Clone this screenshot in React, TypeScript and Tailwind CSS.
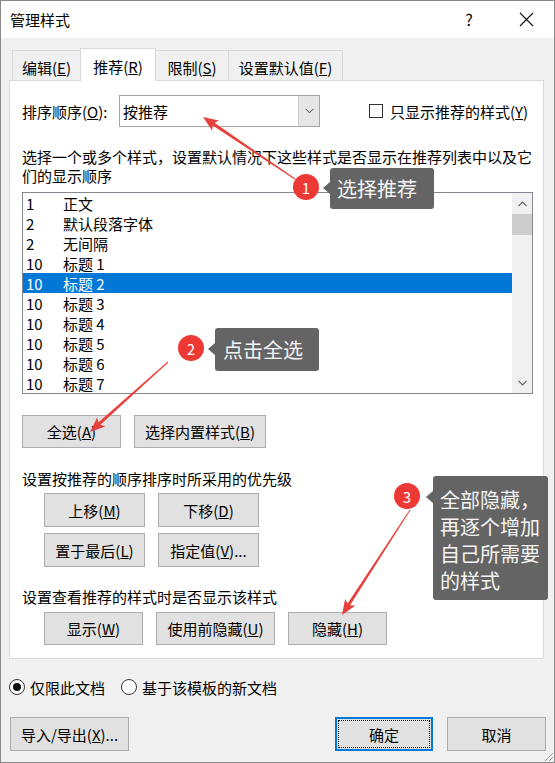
import React from "react";

type P = { children?: React.ReactNode; className?: string };

function Btn({ children, className = "" }: P) {
  return (
    <div
      className={`flex items-center justify-center bg-[#e1e1e1] border border-[#adadad] text-[15px] leading-[19px] text-black ${className}`}
    >
      {children}
    </div>
  );
}

function Arrow({ x1, y1, x2, y2 }: { x1: number; y1: number; x2: number; y2: number }) {
  const dx = x2 - x1;
  const dy = y2 - y1;
  const len = Math.hypot(dx, dy);
  const ux = dx / len;
  const uy = dy / len;
  const nx = -uy;
  const ny = ux;
  const hl = 15;
  const hw = 6;
  const bx = x2 - ux * hl;
  const by = y2 - uy * hl;
  const f = (a: number[][]) => a.map((p) => `${p[0].toFixed(1)},${p[1].toFixed(1)}`).join(" ");
  const shaft = [
    [x1 + nx * 0.5, y1 + ny * 0.5],
    [bx + ux * 4 + nx * 1.6, by + uy * 4 + ny * 1.6],
    [bx + ux * 4 - nx * 1.6, by + uy * 4 - ny * 1.6],
    [x1 - nx * 0.5, y1 - ny * 0.5],
  ];
  const head = [
    [x2, y2],
    [bx + nx * hw, by + ny * hw],
    [bx + ux * 3, by + uy * 3],
    [bx - nx * hw, by - ny * hw],
  ];
  return (
    <g fill="#e8403b">
      <polygon points={f(shaft)} />
      <polygon points={f(head)} />
    </g>
  );
}

const rows: [string, string][] = [
  ["1", "正文"],
  ["2", "默认段落字体"],
  ["2", "无间隔"],
  ["10", "标题 1"],
  ["10", "标题 2"],
  ["10", "标题 3"],
  ["10", "标题 4"],
  ["10", "标题 5"],
  ["10", "标题 6"],
  ["10", "标题 7"],
];

export default function App() {
  return (
    <div
      lang="zh-CN"
      className="relative w-[555px] h-[763px] overflow-hidden border border-[#8a8a8a] bg-[#f0f0f0] font-['Noto_Sans_CJK_SC','Noto_Sans',sans-serif] text-[15px] leading-[19px] text-black"
    >
      {/* Title bar */}
      <div className="flex h-[37px] items-center bg-white pl-[9px]">
        <span className="text-[15px]">管理样式</span>
        <div className="ml-auto flex items-center">
          <span className="w-[30px] text-center text-[16px]">?</span>
          <span className="ml-[27px] mr-[13px] flex w-[30px] justify-center">
            <svg width="15" height="15" viewBox="0 0 15 15">
              <path d="M1 1 L14 14 M14 1 L1 14" stroke="#111" strokeWidth="1.1" />
            </svg>
          </span>
        </div>
      </div>

      {/* Tabs */}
      <div className="ml-[11px] mt-[10px] flex h-[32px] items-end">
        <div className="flex h-[30px] w-[68px] items-center justify-center border-l border-t border-[#d9d9d9] pt-[3px]">
          编辑(<u>E</u>)
        </div>
        <div className="relative z-10 mb-[-1px] flex h-[33px] w-[76px] items-center justify-center border-l border-r border-t border-[#d9d9d9] bg-white pt-[2px]">
          推荐(<u>R</u>)
        </div>
        <div className="flex h-[30px] w-[72px] items-center justify-center border-t border-[#d9d9d9] pt-[3px]">
          限制(<u>S</u>)
        </div>
        <div className="flex h-[30px] w-[115px] items-center justify-center border-l border-r border-t border-[#d9d9d9] pt-[3px]">
          设置默认值(<u>F</u>)
        </div>
      </div>

      {/* Panel */}
      <div className="ml-[8px] h-[579px] w-[535px] border border-[#d9d9d9] bg-white pl-[12px]">
        <div className="mt-[14px] flex h-[32px] items-center">
          <span className="w-[97px]">
            排序顺序(<u>O</u>):
          </span>
          <div className="flex h-[32px] w-[201px] items-stretch border border-[#a5a5a5] bg-white">
            <div className="flex flex-1 items-center pl-[3px]">按推荐</div>
            <div className="flex w-[21px] items-center justify-center border-l border-[#c8c8c8] bg-[#e6e6e6]">
              <svg width="9" height="6" viewBox="0 0 9 6">
                <path d="M0.5 0.8 L4.5 4.8 L8.5 0.8" fill="none" stroke="#444" strokeWidth="1" />
              </svg>
            </div>
          </div>
          <div className="ml-[49px] h-[14px] w-[14px] border border-[#333] bg-white" />
          <span className="ml-[7px]">
            只显示推荐的样式(<u>Y</u>)
          </span>
        </div>

        <div className="mt-[20px] leading-[19px]">
          选择一个或多个样式，设置默认情况下这些样式是否显示在推荐列表中以及它
          <br />
          们的显示顺序
        </div>

        {/* List */}
        <div className="mt-[7px] flex h-[202px] w-[511px] border border-[#828790] bg-white">
          <div className="w-[489px]">
            {rows.map(([n, name], i) => (
              <div
                key={i}
                className={`flex h-[20px] items-center ${i === 4 ? "bg-[#0078d7] text-white" : ""}`}
              >
                <span className="w-[40px] pl-[3px]">{n}</span>
                <span>{name}</span>
              </div>
            ))}
          </div>
          <div className="flex w-[20px] flex-col bg-[#f0f0f0]">
            <div className="flex h-[21px] items-center justify-center">
              <svg width="9" height="6" viewBox="0 0 9 6">
                <path d="M0.5 5.2 L4.5 1.2 L8.5 5.2" fill="none" stroke="#606060" strokeWidth="1.2" />
              </svg>
            </div>
            <div className="h-[21px] bg-[#cdcdcd]" />
            <div className="flex-1" />
            <div className="flex h-[21px] items-center justify-center">
              <svg width="9" height="6" viewBox="0 0 9 6">
                <path d="M0.5 0.8 L4.5 4.8 L8.5 0.8" fill="none" stroke="#606060" strokeWidth="1.2" />
              </svg>
            </div>
          </div>
        </div>

        <div className="mt-[21px] flex gap-[13px]">
          <Btn className="h-[33px] w-[99px]">
            全选(<u>A</u>)
          </Btn>
          <Btn className="h-[33px] w-[132px]">
            选择内置样式(<u>B</u>)
          </Btn>
        </div>

        <div className="mt-[21px]">设置按推荐的顺序排序时所采用的优先级</div>
        <div className="ml-[22px] mt-[5px] grid w-[215px] grid-cols-2 gap-x-[13px] gap-y-[6px]">
          <Btn className="h-[34px]">
            上移(<u>M</u>)
          </Btn>
          <Btn className="h-[34px]">
            下移(<u>D</u>)
          </Btn>
          <Btn className="h-[34px]">
            置于最后(<u>L</u>)
          </Btn>
          <Btn className="h-[34px]">
            指定值(<u>V</u>)...
          </Btn>
        </div>

        <div className="mt-[20px]">设置查看推荐的样式时是否显示该样式</div>
        <div className="ml-[22px] mt-[6px] flex gap-[13px]">
          <Btn className="h-[33px] w-[99px]">
            显示(<u>W</u>)
          </Btn>
          <Btn className="h-[33px] w-[119px]">
            使用前隐藏(<u>U</u>)
          </Btn>
          <Btn className="h-[33px] w-[99px]">
            隐藏(<u>H</u>)
          </Btn>
        </div>
      </div>

      {/* Radios */}
      <div className="ml-[8px] mt-[18px] flex h-[20px] items-center">
        <div className="flex h-[16px] w-[16px] items-center justify-center rounded-full border border-[#333] bg-white">
          <div className="h-[8px] w-[8px] rounded-full bg-[#111]" />
        </div>
        <span className="ml-[5px]">仅限此文档</span>
        <div className="ml-[16px] h-[16px] w-[16px] rounded-full border border-[#333] bg-white" />
        <span className="ml-[5px]">基于该模板的新文档</span>
      </div>

      {/* Bottom buttons */}
      <div className="ml-[9px] mr-[8px] mt-[20px] flex">
        <Btn className="h-[34px] w-[119px]">
          导入/导出(<u>X</u>)...
        </Btn>
        <div className="ml-auto flex h-[34px] w-[98px] border-2 border-[#0078d7] bg-[#e1e1e1]">
          <div className="m-[1px] flex flex-1 items-center justify-center border border-dotted border-black">
            确定
          </div>
        </div>
        <Btn className="ml-[14px] h-[34px] w-[99px]">取消</Btn>
      </div>

      {/* Resize grip */}
      <svg className="absolute bottom-0 right-0" width="12" height="12" viewBox="0 0 12 12">
        <path d="M11 3 L3 11 M11 7 L7 11" stroke="#a0a0a0" strokeWidth="1" />
      </svg>

      {/* Annotations */}
      <svg className="pointer-events-none absolute left-[-1px] top-[-1px]" width="555" height="763">
        <Arrow x1={295} y1={179} x2={203} y2={117} />
        <Arrow x1={168} y1={362} x2={90} y2={432} />
        <Arrow x1={410} y1={510} x2={342} y2={615} />
      </svg>

      <div className="absolute left-[292px] top-[173px] flex h-[26px] w-[26px] items-center justify-center rounded-full bg-[#ec3934] text-[15px] text-white">
        1
      </div>
      <div className="absolute left-[329px] top-[167px] flex h-[41px] w-[104px] items-center rounded-[3px] bg-[#646464] pl-[7px] text-[20px] leading-[27px] text-[#f4f4f4]">
        <span className="absolute left-[-7px] top-[14px] h-0 w-0 border-y-[6px] border-r-[7px] border-y-transparent border-r-[#646464]" />
        选择推荐
      </div>

      <div className="absolute left-[177px] top-[334px] flex h-[26px] w-[26px] items-center justify-center rounded-full bg-[#ec3934] text-[15px] text-white">
        2
      </div>
      <div className="absolute left-[214px] top-[327px] flex h-[43px] w-[104px] items-center rounded-[3px] bg-[#646464] pl-[8px] text-[20px] leading-[27px] text-[#f4f4f4]">
        <span className="absolute left-[-7px] top-[15px] h-0 w-0 border-y-[6px] border-r-[7px] border-y-transparent border-r-[#646464]" />
        点击全选
      </div>

      <div className="absolute left-[393px] top-[482px] flex h-[26px] w-[26px] items-center justify-center rounded-full bg-[#ec3934] text-[15px] text-white">
        3
      </div>
      <div className="absolute left-[432px] top-[475px] w-[115px] rounded-[3px] bg-[#646464] pb-[6px] pl-[7px] pt-[10px] text-[20px] leading-[27px] text-[#f4f4f4]">
        <span className="absolute left-[-7px] top-[15px] h-0 w-0 border-y-[6px] border-r-[7px] border-y-transparent border-r-[#646464]" />
        全部隐藏，
        <br />
        再逐个增加
        <br />
        自己所需要
        <br />
        的样式
      </div>
    </div>
  );
}
